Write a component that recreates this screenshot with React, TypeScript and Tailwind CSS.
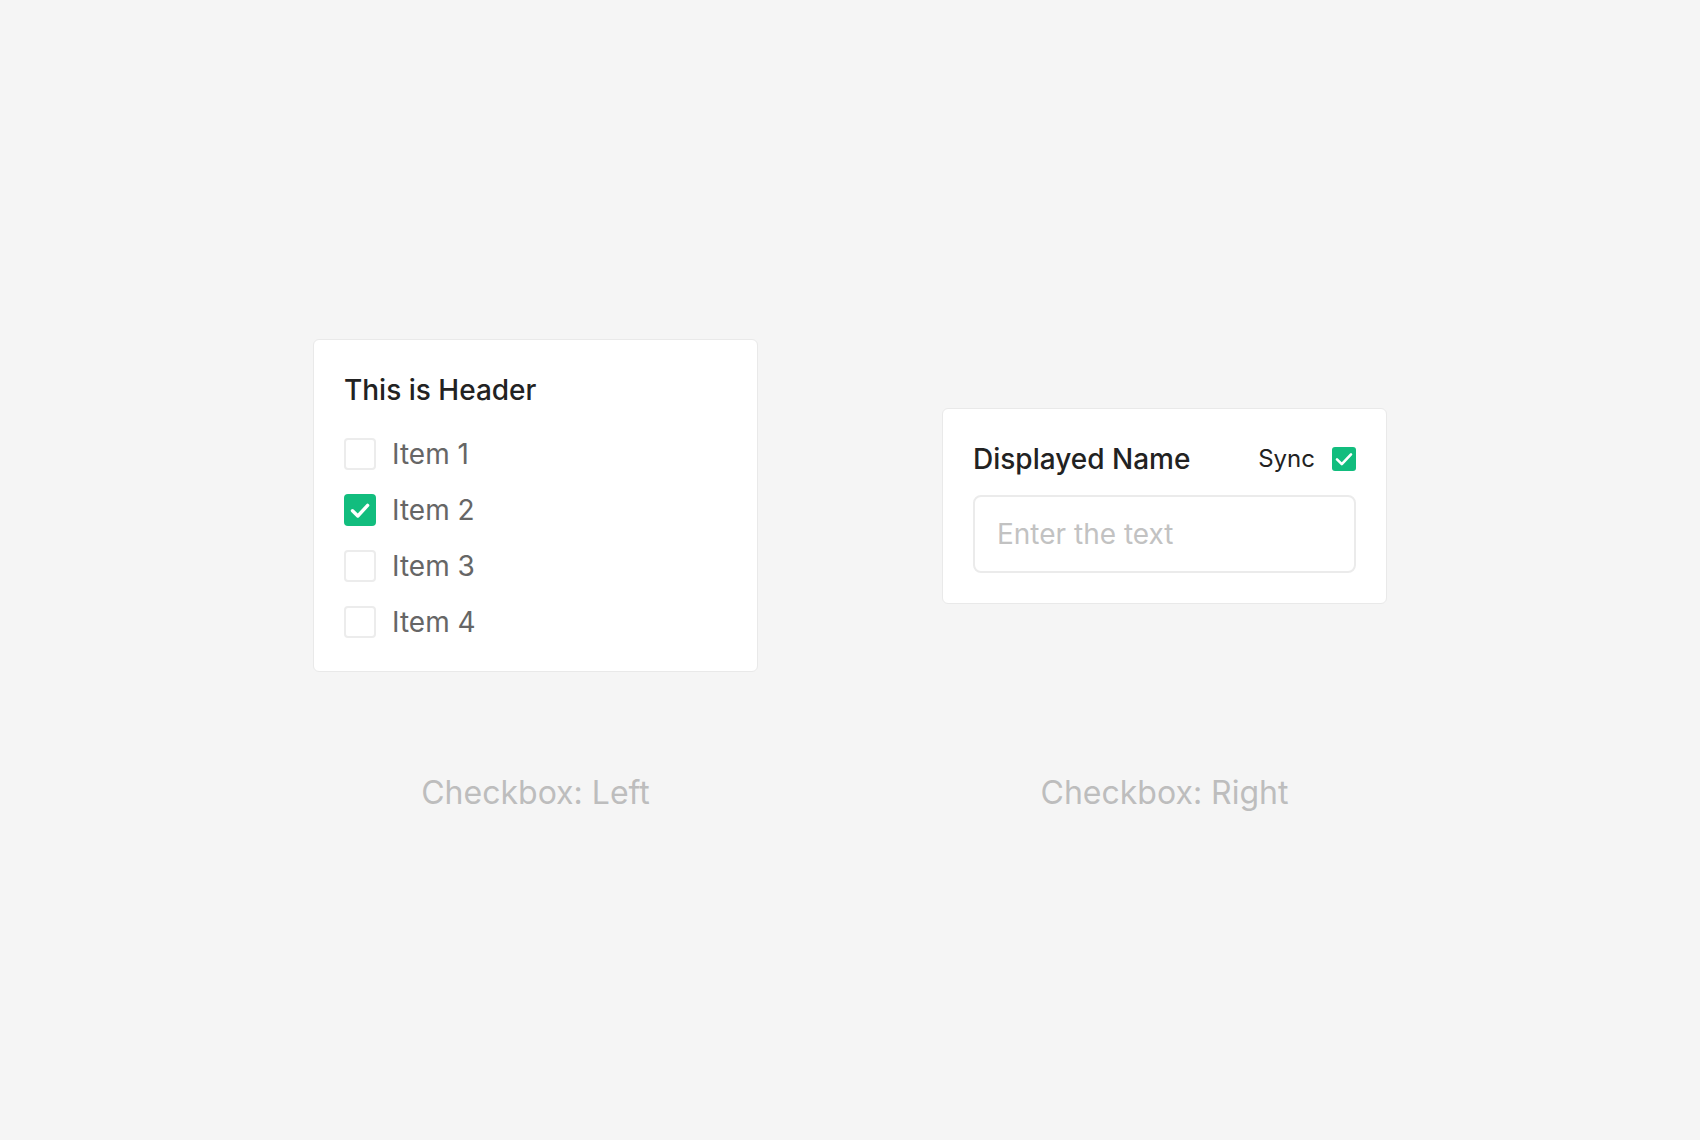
import React from "react";

function CheckIcon({ size }: { size: "lg" | "sm" }) {
  if (size === "lg") {
    return (
      <svg width="32" height="32" viewBox="0 0 32 32" fill="none">
        <path d="M8.5 16.8 L13.8 22 L23.6 11.4" stroke="#ffffff" strokeWidth="3.4" strokeLinecap="round" strokeLinejoin="round" />
      </svg>
    );
  }
  return (
    <svg width="24" height="24" viewBox="0 0 24 24" fill="none">
      <path d="M5 12.4 L9.8 17.2 L19 7.4" stroke="#ffffff" strokeWidth="2.6" strokeLinecap="round" strokeLinejoin="round" />
    </svg>
  );
}

function Row({ label, checked }: { label: string; checked?: boolean }) {
  return (
    <div className="flex h-[40px] items-center gap-[16px]">
      {checked ? (
        <div className="flex h-[32px] w-[32px] items-center justify-center rounded-[4px] bg-[#12bd7e]">
          <CheckIcon size="lg" />
        </div>
      ) : (
        <div className="h-[32px] w-[32px] rounded-[4px] border-2 border-[#ececec] bg-white" />
      )}
      <span className="text-[28px] leading-[40px] text-[#666666]">{label}</span>
    </div>
  );
}

export default function App() {
  return (
    <div
      className="flex h-[1140px] w-full justify-center gap-[184px] bg-[#f5f5f5] pt-[339px]"
      style={{ fontFamily: "Inter, 'Noto Sans', sans-serif" }}
    >
      <div className="flex w-[445px] flex-col items-center">
        <div className="flex h-[333px] w-full items-center">
          <div className="w-full rounded-[6px] border border-[#e9e9e9] bg-white px-[30px] pb-[29px] pt-[32px]">
            <div className="mb-[26px] text-[28px] font-medium leading-[36px] text-[#222222]">This is Header</div>
            <div className="flex flex-col gap-[16px]">
              <Row label="Item 1" />
              <Row label="Item 2" checked />
              <Row label="Item 3" />
              <Row label="Item 4" />
            </div>
          </div>
        </div>
        <div className="mt-[102px] text-[32px] leading-[38px] text-[#bdbdbd]">Checkbox: Left</div>
      </div>

      <div className="flex w-[445px] flex-col items-center">
        <div className="flex h-[333px] w-full items-center">
          <div className="w-full rounded-[6px] border border-[#e9e9e9] bg-white p-[30px]">
            <div className="flex h-[40px] items-center justify-between">
              <span className="text-[28px] font-medium leading-[40px] text-[#222222]">Displayed Name</span>
              <div className="flex items-center gap-[17px]">
                <span className="text-[24px] leading-[40px] text-[#222222]">Sync</span>
                <div className="flex h-[24px] w-[24px] items-center justify-center rounded-[3px] bg-[#12bd7e]">
                  <CheckIcon size="sm" />
                </div>
              </div>
            </div>
            <div className="mt-[16px] flex h-[78px] items-center rounded-[8px] border-2 border-[#ebebeb] px-[22px]">
              <span className="text-[28px] leading-[40px] text-[#c2c2c2]">Enter the text</span>
            </div>
          </div>
        </div>
        <div className="mt-[102px] text-[32px] leading-[38px] text-[#bdbdbd]">Checkbox: Right</div>
      </div>
    </div>
  );
}
